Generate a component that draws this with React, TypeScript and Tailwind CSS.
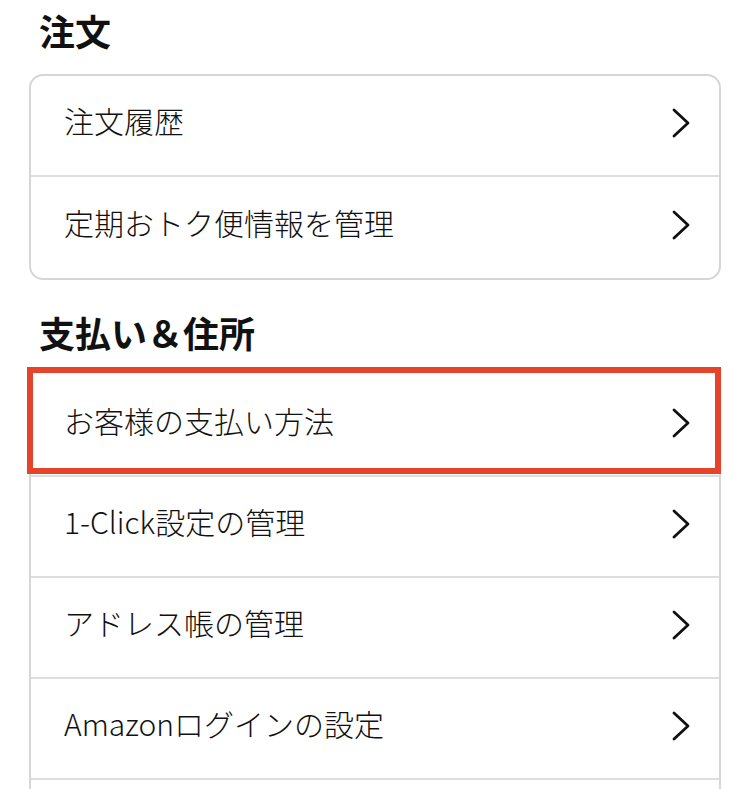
const font = { fontFamily: '"Noto Sans CJK JP", "Noto Sans", sans-serif' };

const Chevron = () => (
  <svg width="20" height="32" viewBox="0 0 20 32" fill="none" className="shrink-0">
    <path d="M3 3 L17 16 L3 29" stroke="#111" strokeWidth="2.8" strokeLinecap="round" strokeLinejoin="round" />
  </svg>
);

const Row = ({ label, last = false }: { label: string; last?: boolean }) => (
  <div
    className={
      "relative flex items-center justify-between h-[101px] pl-[33px] pr-[28px] pb-[6px] " +
      (last ? "" : "border-b-2 border-[#dedede]")
    }
  >
    <span className="text-[30px] font-light text-[#111] leading-none mb-[6px]">{label}</span>
    <Chevron />
  </div>
);

const Heading = ({ children }: { children: string }) => (
  <div className="h-[68px] flex items-center pl-[10px] pb-[8px]">
    <h2 className="text-[36px] font-bold text-[#111] leading-none">{children}</h2>
  </div>
);

const App = () => {
  return (
    <div className="bg-white min-h-screen px-[29px]" style={font}>
      <Heading>注文</Heading>
      <div className="mt-[6px] border-2 border-[#d6d6d6] rounded-[14px] overflow-hidden">
        <Row label="注文履歴" />
        <Row label="定期おトク便情報を管理" last />
      </div>

      <div className="mt-[22px]">
        <Heading>支払い＆住所</Heading>
      </div>
      <div className="mt-[4px] border-2 border-[#d6d6d6] rounded-[14px]">
        <div className="relative">
          {/* highlight frame, white fill hides the card edge behind it */}
          <div className="absolute -left-[4px] -right-[2px] -top-[9px] bottom-[3px] bg-white border-[6px] border-[#e6432b]" />
          <Row label="お客様の支払い方法" />
        </div>
        <Row label="1-Click設定の管理" />
        <Row label="アドレス帳の管理" />
        <Row label="Amazonログインの設定" />
        <div className="h-[101px]" />
      </div>
    </div>
  );
};

export default App;
